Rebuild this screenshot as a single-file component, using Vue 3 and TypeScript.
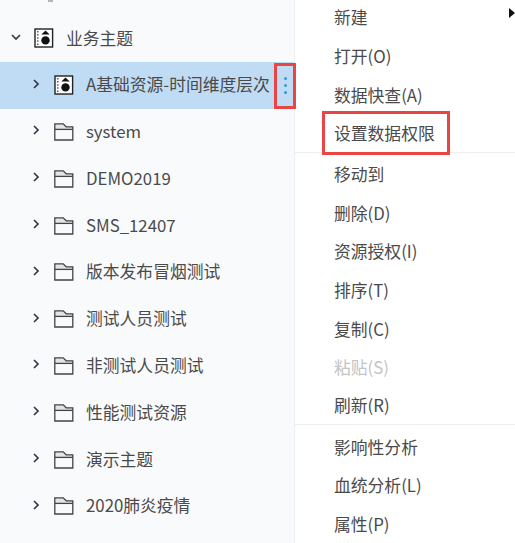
<script setup lang="ts">
interface TreeRow {
  label: string;
  icon: 'topic' | 'folder';
  level: number;
  expanded?: boolean;
  active?: boolean;
}

interface MenuItem {
  label: string;
  disabled?: boolean;
  submenu?: boolean;
  marked?: boolean;
  divider?: boolean;
}

const rows: TreeRow[] = [
  { label: '业务主题', icon: 'topic', level: 0, expanded: true },
  { label: 'A基础资源-时间维度层次', icon: 'topic', level: 1, active: true },
  { label: 'system', icon: 'folder', level: 1 },
  { label: 'DEMO2019', icon: 'folder', level: 1 },
  { label: 'SMS_12407', icon: 'folder', level: 1 },
  { label: '版本发布冒烟测试', icon: 'folder', level: 1 },
  { label: '测试人员测试', icon: 'folder', level: 1 },
  { label: '非测试人员测试', icon: 'folder', level: 1 },
  { label: '性能测试资源', icon: 'folder', level: 1 },
  { label: '演示主题', icon: 'folder', level: 1 },
  { label: '2020肺炎疫情', icon: 'folder', level: 1 },
];

const menu: MenuItem[] = [
  { label: '新建', submenu: true },
  { label: '打开(O)' },
  { label: '数据快查(A)' },
  { label: '设置数据权限', marked: true, divider: true },
  { label: '移动到' },
  { label: '删除(D)' },
  { label: '资源授权(I)' },
  { label: '排序(T)' },
  { label: '复制(C)' },
  { label: '粘贴(S)', disabled: true },
  { label: '刷新(R)', divider: true },
  { label: '影响性分析' },
  { label: '血统分析(L)' },
  { label: '属性(P)' },
];
</script>

<template>
  <div class="screen">
    <div class="tree">
      <span class="clipped"></span>
      <div
        v-for="row in rows"
        :key="row.label"
        class="row"
        :class="{ active: row.active, nested: row.level === 1 }"
      >
        <svg class="caret" width="10" height="10" viewBox="0 0 10 10">
          <path v-if="row.expanded" d="M1 3l4 4 4-4" />
          <path v-else d="M3 1l4 4-4 4" />
        </svg>
        <svg v-if="row.icon === 'topic'" class="icon" width="20" height="20" viewBox="0 0 20 20">
          <rect x="1" y="1" width="17.6" height="18" fill="#fff" stroke="#222" stroke-width="1.4" />
          <path d="M3.8 3v14" stroke="#445" stroke-width="1.3" stroke-dasharray="1.5 1.6" />
          <path d="M11.5 2.6l4.2 4h-8.4z" fill="#111" />
          <circle cx="11.5" cy="12.4" r="4.2" fill="#111" />
        </svg>
        <svg v-else class="icon" width="20" height="20" viewBox="0 0 20 20">
          <path d="M.8 7V1.8h8.4l3 3h6.6V7z" fill="#e4e4e4" />
          <path d="M.8 18V1.8h8.4l3 3h6.6V18z" fill="none" stroke="#444" stroke-width="1.3" />
          <path d="M.8 7.4h18" stroke="#444" stroke-width="1.3" />
        </svg>
        <span class="label">{{ row.label }}</span>
        <span v-if="row.active" class="more">
          <i></i><i></i><i></i>
        </span>
      </div>
    </div>

    <ul class="menu">
      <li
        v-for="item in menu"
        :key="item.label"
        class="item"
        :class="{ disabled: item.disabled, divider: item.divider }"
      >
        <span>{{ item.label }}</span>
        <span v-if="item.submenu" class="arrow"></span>
        <span v-if="item.marked" class="mark"></span>
      </li>
    </ul>
  </div>
</template>

<style>
html,
body {
  margin: 0;
  overflow: hidden;
}
</style>

<style scoped>
.screen {
  display: flex;
  width: 515px;
  height: 543px;
  overflow: hidden;
  font-family: "Noto Sans CJK SC", "Noto Sans", sans-serif;
  font-size: 16.8px;
  color: #4a4a4a;
  background: #fff;
}

.tree {
  position: relative;
  width: 295px;
  flex-shrink: 0;
  box-sizing: border-box;
  padding-top: 15px;
  background: #f9fafc;
  border-right: 1px solid #eceef1;
}

.clipped {
  position: absolute;
  left: 48px;
  top: 0;
  width: 5px;
  height: 2px;
  background: #b5b5b5;
}

.row {
  position: relative;
  display: flex;
  align-items: center;
  height: 46.8px;
  padding-left: 11px;
}

.row.nested {
  padding-left: 31px;
}

.row.active {
  background: #c0dcf5;
}

.caret {
  flex-shrink: 0;
  margin-right: 13px;
  margin-top: -3px;
}

.caret path {
  fill: none;
  stroke: #2f3b48;
  stroke-width: 1.7;
}

.icon {
  flex-shrink: 0;
  margin-right: 12px;
}

.label {
  white-space: nowrap;
  line-height: 1;
  margin-top: -1px;
}

.more {
  position: absolute;
  left: 274px;
  top: 1px;
  width: 22px;
  height: 46px;
  box-sizing: border-box;
  display: flex;
  flex-direction: column;
  align-items: center;
  justify-content: center;
  gap: 4px;
  border: 3px solid #e94545;
}

.more i {
  width: 3px;
  height: 3px;
  border-radius: 50%;
  background: #2f9bd6;
}

.menu {
  flex: 1;
  margin: -1.5px 0 0;
  padding: 0;
  list-style: none;
}

.item {
  position: relative;
  display: flex;
  align-items: center;
  height: 38.6px;
  padding-left: 39px;
  box-sizing: border-box;
  line-height: 1;
}

.item.divider {
  border-bottom: 1px solid #eeeeee;
  margin-bottom: 2.4px;
}

.item.disabled {
  color: #c4c4c4;
}

.arrow {
  position: absolute;
  right: 0;
  top: 9px;
  border-left: 6px solid #111;
  border-top: 5px solid transparent;
  border-bottom: 5px solid transparent;
}

.mark {
  position: absolute;
  left: 27px;
  top: -3.5px;
  width: 128px;
  height: 44px;
  box-sizing: border-box;
  border: 3px solid #e94545;
}
</style>
